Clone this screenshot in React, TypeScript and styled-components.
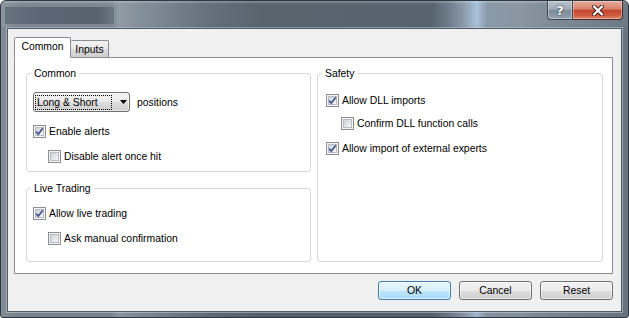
import React from "react";
import styled, { createGlobalStyle } from "styled-components";

const Global = createGlobalStyle`
  html, body { margin: 0; padding: 0; background: #ffffff; overflow: hidden; }
  body { font-family: "Liberation Sans", Arial, sans-serif; font-size: 10.4px; color: #000; }
  * { box-sizing: border-box; }
`;

const Window = styled.div`
  width: 629px;
  height: 318px;
  border: 1px solid #2c3743;
  border-radius: 6px 6px 3px 3px;
  display: flex;
  flex-direction: column;
  background:
    linear-gradient(180deg, rgba(255,255,255,0.28) 0px, rgba(255,255,255,0) 3px, rgba(255,255,255,0) 24px, rgba(0,0,0,0.06) 27px),
    linear-gradient(90deg,
      #8d959e 0px, #7e8893 18px, #7d8893 110px, #929ca7 118px, #86919c 135px,
      #75828e 170px, #63707c 210px, #58656f 260px, #57646f 430px, #6a7886 445px,
      #8a99a8 462px, #a9c2db 476px, #8a99a8 486px, #8a96a1 520px, #7f8b97 548px, #6c7985 629px);
  overflow: hidden;
`;

const TitleBar = styled.div`
  height: 27px;
  display: flex;
  align-items: flex-start;
  justify-content: space-between;
  padding-left: 4px;
`;

const BlurredTitle = styled.div`
  width: 109px;
  height: 17px;
  margin-top: 6px;
  background: linear-gradient(90deg, #66727e 0%, #5b6774 30%, #56636f 85%, #6a7681 100%);
  filter: blur(0.7px);
`;

const CaptionButtons = styled.div`
  display: flex;
  margin-right: 5px;
`;

const CaptionButton = styled.div<{ $close?: boolean }>`
  width: ${(p) => (p.$close ? 50 : 26)}px;
  height: 19px;
  display: flex;
  align-items: center;
  justify-content: center;
  border: 1px solid ${(p) => (p.$close ? "#4a2a24" : "#3d4854")};
  border-top: none;
  border-left: ${(p) => (p.$close ? "none" : "1px solid #3d4854")};
  border-radius: ${(p) => (p.$close ? "0 0 4px 0" : "0 0 0 4px")};
  background: ${(p) =>
    p.$close
      ? "linear-gradient(180deg, #e6ab9c 0%, #d9806b 45%, #c4462c 52%, #cf5b40 80%, #dc8a6c 100%)"
      : "linear-gradient(180deg, #b9c2cb 0%, #a1acb7 45%, #808d9a 52%, #8996a3 80%, #9aa6b2 100%)"};
  box-shadow: inset 0 0 0 1px rgba(255,255,255,0.35);
  color: #fff;
  font-family: "DejaVu Sans", sans-serif;
  font-weight: bold;
  font-size: 13px;
  text-shadow: 0 0 2px #2a3440, 0 0 1px #2a3440;
`;

const Client = styled.div`
  flex: 1;
  margin: 0 6px 5px 6px;
  border: 1px solid #4e5a66;
  box-shadow: 0 0 0 1px rgba(215, 225, 235, 0.45);
  background: #f0f0f0;
  padding: 8px 8px 11px 6px;
  display: flex;
  flex-direction: column;
`;

const TabStrip = styled.div`
  display: flex;
  align-items: flex-end;
  height: 21px;
  margin-bottom: -1px;
  position: relative;
  z-index: 1;
`;

const Tab = styled.div<{ $active?: boolean; $w: number }>`
  width: ${(p) => p.$w}px;
  height: ${(p) => (p.$active ? 21 : 18)}px;
  border: 1px solid #898c95;
  border-left: ${(p) => (p.$active ? "1px solid #898c95" : "none")};
  border-bottom: ${(p) => (p.$active ? "1px solid #ffffff" : "1px solid #898c95")};
  border-radius: 2px 2px 0 0;
  background: ${(p) =>
    p.$active ? "#ffffff" : "linear-gradient(180deg, #f2f2f2 0%, #ebebeb 50%, #dddddd 51%, #cfcfcf 100%)"};
  display: flex;
  align-items: center;
  justify-content: center;
  padding-bottom: ${(p) => (p.$active ? 2 : 0)}px;
  line-height: 13px;
`;

const Panel = styled.div`
  flex: 1;
  background: #ffffff;
  border: 1px solid #898c95;
  display: grid;
  grid-template-columns: 285px 286px;
  column-gap: 6px;
  padding: 9px 9px 11px 11px;
`;

const Column = styled.div`
  display: flex;
  flex-direction: column;
  gap: 10px;
`;

const Group = styled.fieldset<{ $padTop: number; $padBottom?: number; $grow?: boolean }>`
  margin: 0;
  min-width: 0;
  border: 1px solid #d5d9dd;
  border-radius: 3px;
  padding: ${(p) => p.$padTop}px 6px ${(p) => p.$padBottom ?? 0}px 6px;
  flex: ${(p) => (p.$grow ? 1 : "none")};
`;

const Legend = styled.legend`
  padding: 0 3px;
  margin-left: -2px;
  line-height: 13px;
  color: #000;
`;

const Row = styled.div<{ $indent?: number; $top?: number }>`
  display: flex;
  align-items: center;
  gap: 3px;
  height: 13px;
  line-height: 13px;
  margin-left: ${(p) => p.$indent ?? 0}px;
  margin-top: ${(p) => p.$top ?? 0}px;
  white-space: nowrap;
`;

const ComboRow = styled.div`
  display: flex;
  align-items: center;
  gap: 7px;
  height: 20px;
`;

const Combo = styled.div`
  width: 97px;
  height: 20px;
  border: 1px solid #707070;
  border-radius: 3px;
  background: linear-gradient(180deg, #f2f2f2 0%, #ebebeb 50%, #dddddd 51%, #cfcfcf 100%);
  box-shadow: inset 0 0 0 1px rgba(255,255,255,0.55);
  display: flex;
  align-items: center;
  padding-left: 1px;
`;

const FocusText = styled.div`
  width: 77px;
  height: 15px;
  border: 1px dotted #000;
  line-height: 13px;
  padding-left: 1px;
  white-space: nowrap;
`;

const ComboArrow = styled.svg`
  margin-left: 8px;
`;

const BoxFrame = styled.div`
  width: 13px;
  height: 13px;
  border: 1px solid #8e8f8f;
  background: #f4f4f4;
  padding: 1px;
  flex: none;
  position: relative;
`;

const BoxInner = styled.div`
  width: 9px;
  height: 9px;
  border: 1px solid #b8bdc3;
  background: linear-gradient(135deg, #cdd1d6 0%, #e4e6e9 55%, #f7f7f7 100%);
`;

const CheckMark = styled.svg`
  position: absolute;
  left: 0;
  top: 0;
`;

const ButtonRow = styled.div`
  display: flex;
  justify-content: flex-end;
  gap: 8px;
  margin-top: 7px;
  height: 19px;
`;

const Button = styled.div<{ $default?: boolean }>`
  width: 73px;
  height: 19px;
  border: 1px solid ${(p) => (p.$default ? "#3c7fb1" : "#707070")};
  border-radius: 3px;
  background: ${(p) =>
    p.$default
      ? "linear-gradient(180deg, #e8f5fc 0%, #d9f0fc 50%, #bee6fd 51%, #a9dbf6 100%)"
      : "linear-gradient(180deg, #f2f2f2 0%, #ebebeb 50%, #dddddd 51%, #cfcfcf 100%)"};
  box-shadow: inset 0 0 0 1px rgba(255,255,255,0.6);
  display: flex;
  align-items: center;
  justify-content: center;
  line-height: 13px;
`;

function CheckBox({ checked }: { checked?: boolean }) {
  return (
    <BoxFrame>
      <BoxInner />
      {checked && (
        <CheckMark width="11" height="11" viewBox="0 0 11 11">
          <path d="M2.2 5.6 L4.3 8.2 L8.8 2.2" fill="none" stroke="#3e5389" strokeWidth="1.7" strokeLinejoin="miter" />
        </CheckMark>
      )}
    </BoxFrame>
  );
}

function Check({ label, checked, indent, top }: { label: string; checked?: boolean; indent?: number; top?: number }) {
  return (
    <Row $indent={indent} $top={top}>
      <CheckBox checked={checked} />
      <span>{label}</span>
    </Row>
  );
}

export default function App() {
  return (
    <>
      <Global />
      <Window>
        <TitleBar>
          <BlurredTitle />
          <CaptionButtons>
            <CaptionButton>?</CaptionButton>
            <CaptionButton $close>
              <svg width="14" height="11" viewBox="0 0 14 11">
                <path d="M3 1.5 L11 9.5 M11 1.5 L3 9.5" stroke="#3a1a14" strokeWidth="4" strokeLinecap="round" />
                <path d="M3 1.5 L11 9.5 M11 1.5 L3 9.5" stroke="#ffffff" strokeWidth="2.4" strokeLinecap="round" />
              </svg>
            </CaptionButton>
          </CaptionButtons>
        </TitleBar>
        <Client>
          <TabStrip>
            <Tab $active $w={57}>Common</Tab>
            <Tab $w={38}>Inputs</Tab>
          </TabStrip>
          <Panel>
            <Column>
              <Group $padTop={12} $padBottom={8}>
                <Legend>Common</Legend>
                <ComboRow>
                  <Combo>
                    <FocusText>Long &amp; Short</FocusText>
                    <ComboArrow width="7" height="4" viewBox="0 0 7 4">
                      <path d="M0 0 H7 L3.5 4 Z" fill="#000" />
                    </ComboArrow>
                  </Combo>
                  <span>positions</span>
                </ComboRow>
                <Check label="Enable alerts" checked top={13} />
                <Check label="Disable alert once hit" indent={15} top={12} />
              </Group>
              <Group $padTop={12} $grow>
                <Legend>Live Trading</Legend>
                <Check label="Allow live trading" checked />
                <Check label="Ask manual confirmation" indent={15} top={12} />
              </Group>
            </Column>
            <Group $padTop={14}>
              <Legend>Safety</Legend>
              <Check label="Allow DLL imports" checked indent={2} />
              <Check label="Confirm DLL function calls" indent={17} top={10} />
              <Check label="Allow import of external experts" checked indent={2} top={12} />
            </Group>
          </Panel>
          <ButtonRow>
            <Button $default>OK</Button>
            <Button>Cancel</Button>
            <Button>Reset</Button>
          </ButtonRow>
        </Client>
      </Window>
    </>
  );
}
